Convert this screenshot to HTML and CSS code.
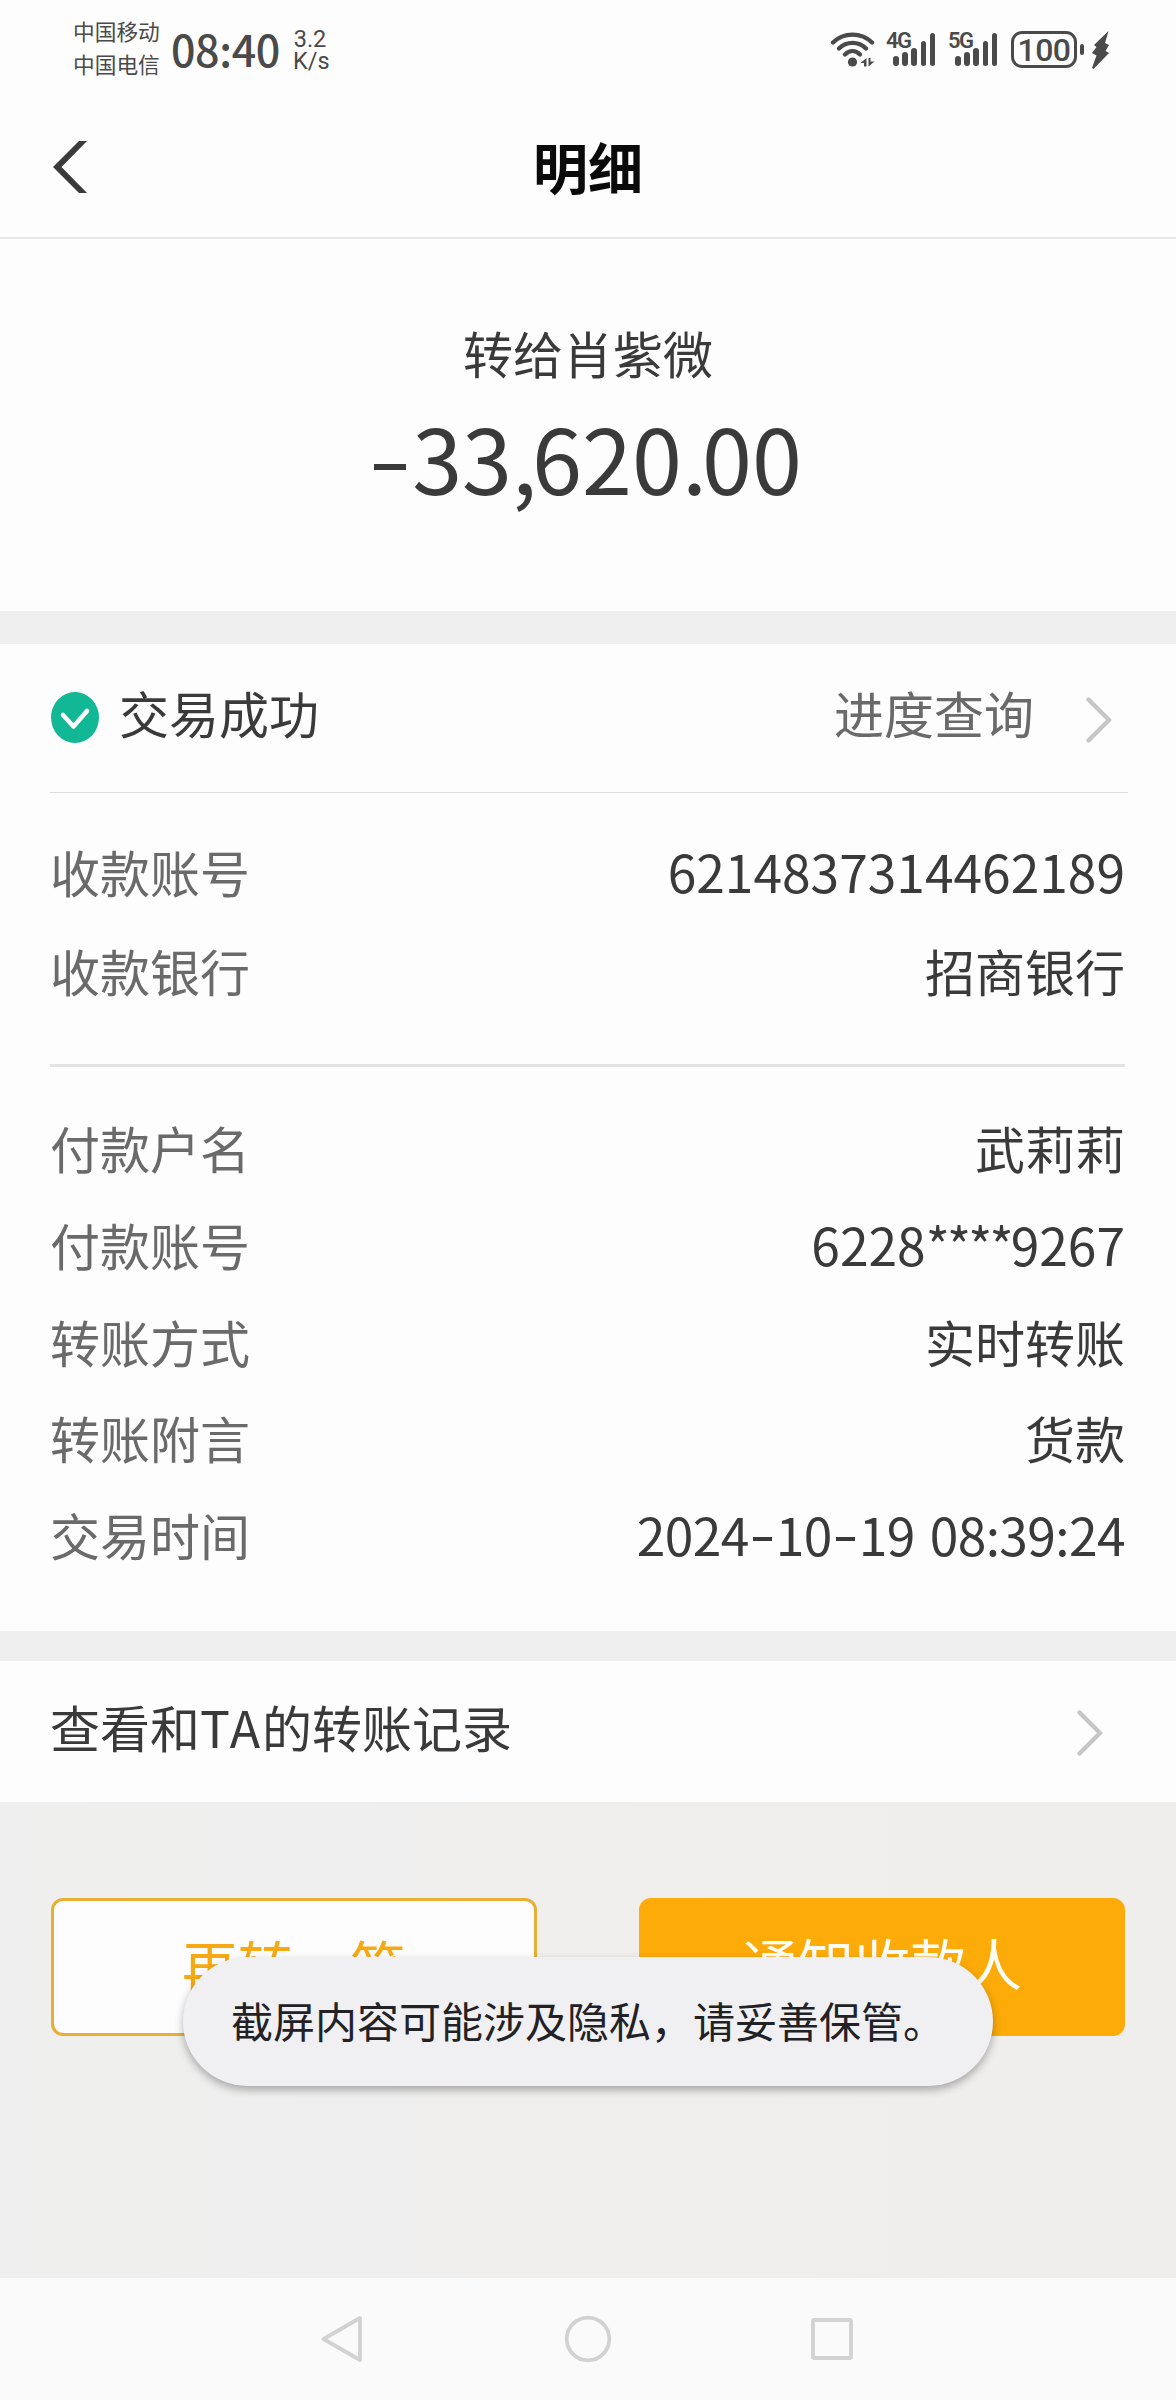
FILE: index.html
```html
<!DOCTYPE html>
<html lang="zh-CN">
  <head>
    <meta charset="utf-8">
    <title>明细</title>
    <link rel="stylesheet" href="styles.css">
  </head>
  <body>
    <div class="status">
      <div class="carriers">
        <div>中国移动</div>
        <div>中国电信</div>
      </div>
      <div class="clock">08:40</div>
      <div class="speed">
        <div>3.2</div>
        <div>K/s</div>
      </div>
      <div class="status-icons">
        <svg class="wifi" width="46" height="36" viewBox="0 0 46 36">
          <g fill="none" stroke="#4a4a4a" stroke-width="4.4" stroke-linecap="round">
            <path d="M3 11.5C13.500 1 31.500 1 42 11.500"/>
            <path d="M9 17.500C16.500 10 28.500 10 36 17.500"/>
            <path d="M15 23.500C19.500 19 25.500 19 30 23.500"/>
          </g>
          <circle cx="22.500" cy="31" r="4.600" fill="#4a4a4a"/>
          <path d="M30.500 32l6-5v8.500h-2.500v-3.500zM38.500 27h2v3.500h4l-6 5z" fill="#4a4a4a"/>
        </svg>
        <div class="signal">
          <span>4G</span>
          <i class="b1"></i><i class="b2"></i><i class="b3"></i><i class="b4"></i><i class="b5"></i>
        </div>
        <div class="signal">
          <span>5G</span>
          <i class="b1"></i><i class="b2"></i><i class="b3"></i><i class="b4"></i><i class="b5"></i>
        </div>
        <div class="battery">100</div>
        <div class="nub"></div>
        <svg class="bolt" width="17" height="38" viewBox="0 0 17 38">
          <path d="M16.500 0L2 14l2.500 2L0 22l4.500 2.500L0 37l1.500 1L17 22l-3.500-2 3.500-6-4-2z" fill="#4a4a4a"/>
        </svg>
      </div>
    </div>

    <div class="header">
      <svg class="back" width="36" height="54" viewBox="0 0 36 54">
        <path d="M27 1h8L9.500 27 35 53h-8L1 27z" fill="#3a3a3a"/>
      </svg>
      <h1>明细</h1>
    </div>

    <div class="summary">
      <div class="payee">转给肖紫微</div>
      <div class="amount"><b></b>33<span>,</span>620<span>.</span>00</div>
    </div>

    <div class="detail">
      <div class="result">
        <svg class="check" width="48" height="51" viewBox="0 0 48 51">
          <ellipse cx="24" cy="25.500" rx="24" ry="25.500" fill="#12b895"/>
          <path d="M12 23l10.500 11.500L36 19" fill="none" stroke="#fff" stroke-width="4.500" stroke-linecap="round" stroke-linejoin="round"/>
        </svg>
        <span>交易成功</span>
        <span class="progress">进度查询</span>
        <svg class="arrow" width="26" height="46" viewBox="0 0 26 46">
          <path d="M2.500 2.500L23 23 2.500 43.500"/>
        </svg>
      </div>
      <div class="group first">
        <div class="row"><label>收款账号</label><span class="num">6214837314462189</span></div>
        <div class="row"><label>收款银行</label><span>招商银行</span></div>
      </div>
      <div class="group second">
        <div class="row"><label>付款户名</label><span>武莉莉</span></div>
        <div class="row"><label>付款账号</label><span class="num">6228<span class="stars">****</span>9267</span></div>
        <div class="row"><label>转账方式</label><span>实时转账</span></div>
        <div class="row"><label>转账附言</label><span>货款</span></div>
        <div class="row"><label>交易时间</label><span class="num time">2024<b></b>10<b></b>19 08:39:24</span></div>
      </div>
    </div>

    <div class="history">
      <span>查看和<span class="ta">TA</span>的转账记录</span>
      <svg class="arrow" width="26" height="46" viewBox="0 0 26 46">
        <path d="M2.500 2.500L23 23 2.500 43.500"/>
      </svg>
    </div>

    <div class="actions">
      <div class="btn">再转一笔</div>
      <div class="btn primary">通知收款人</div>
      <div class="toast">截屏内容可能涉及隐私，请妥善保管。</div>
    </div>

    <div class="nav">
      <svg width="48" height="48" viewBox="0 0 48 48">
        <path d="M40 3v42L3.500 24z"/>
      </svg>
      <svg width="48" height="48" viewBox="0 0 48 48">
        <circle cx="24" cy="24" r="21.300"/>
      </svg>
      <svg width="48" height="48" viewBox="0 0 48 48">
        <rect x="5" y="5" width="38" height="38" rx="1.500"/>
      </svg>
    </div>
  </body>
</html>
```

FILE: styles.css
```css
* {
  box-sizing: border-box;
}
body {
  margin: 0;
  height: 2400px;
  display: flex;
  flex-direction: column;
  background-color: #efefef;
  color: #3a3a3a;
  font-family: "Noto Sans CJK SC", sans-serif;
  font-size: 50px;
  line-height: 70px;
  overflow: hidden;
}

/* status bar */
.status {
  height: 100px;
  padding-left: 73px;
  display: flex;
  background-color: #fdfdfd;
  color: #4a4a4a;
}
.carriers {
  width: 98px;
  padding-top: 14px;
  font-size: 21.7px;
  line-height: 33px;
}
.clock {
  width: 122px;
  padding-top: 13px;
  font-weight: 500;
  font-size: 43px;
  letter-spacing: -0.4px;
}
.speed {
  width: 34px;
  padding-top: 29px;
  font-family: Roboto, sans-serif;
  font-size: 23.5px;
  line-height: 21.5px;
  text-align: center;
}
.status-icons {
  margin-left: auto;
  margin-right: 67px;
  padding-top: 31px;
  display: flex;
  align-items: flex-start;
}
.wifi {
  margin-right: 11px;
}
.signal {
  position: relative;
  width: 50px;
  height: 35px;
  margin-right: 12px;
  padding-left: 6px;
  display: flex;
  align-items: flex-end;
  gap: 3.6px;
}
.signal span {
  position: absolute;
  left: -1px;
  top: 0;
  font-family: Roboto, sans-serif;
  font-weight: 600;
  font-size: 22px;
  line-height: 20px;
  letter-spacing: -1.5px;
}
.signal i {
  width: 5.6px;
  border-radius: 3px;
  background-color: #4a4a4a;
}
.b1 { height: 10px; }
.b2 { height: 14px; }
.b3 { height: 18px; }
.b4 { height: 25px; }
.b5 { height: 33px; }
.battery {
  width: 66px;
  height: 37px;
  border: solid 3px #4a4a4a;
  border-radius: 11px;
  font-family: Roboto, sans-serif;
  font-weight: 500;
  font-size: 32px;
  line-height: 32px;
  letter-spacing: -0.5px;
  text-align: center;
}
.nub {
  width: 4px;
  height: 11px;
  margin: 13px 8px 0 3px;
  border-radius: 2px;
  background-color: #4a4a4a;
}

/* title bar */
.header {
  height: 139px;
  padding: 0 52px;
  display: grid;
  grid-template-columns: 40px 1fr 40px;
  background-color: #fdfdfd;
  border-bottom: solid 2px #e8e8e8;
}
.back {
  margin-top: 40px;
}
h1 {
  margin: 30px 0 0;
  color: #0a0a0a;
  font-size: 55px;
  font-weight: 700;
  line-height: 70px;
  text-align: center;
}

.summary {
  height: 372px;
  padding-top: 78px;
  background-color: #fdfdfd;
  text-align: center;
}
.payee {
  height: 70px;
}
.amount {
  height: 100px;
  margin-top: 19px;
  font-size: 90px;
  line-height: 100px;
}
.amount b {
  display: inline-block;
  width: 32px;
  height: 6px;
  margin-right: 6px;
  vertical-align: 25px;
  background-color: #3a3a3a;
}
.amount span {
  letter-spacing: -5px;
}

.detail {
  height: 987px;
  margin-top: 33px;
  padding: 0 51px 0 50px;
  background-color: #fdfdfd;
}
.result {
  height: 149px;
  margin-right: -3px;
  padding: 33px 0 0 1px;
  display: flex;
  border-bottom: solid 1px #dedede;
}
.check {
  margin: 15px 20px 0 0;
}
.progress {
  margin-left: auto;
  color: #6a6a6a;
}
.arrow {
  fill: none;
  stroke: #c6c6c6;
  stroke-width: 4.4;
  stroke-linecap: round;
}
.result .arrow {
  margin: 20px 16px 0 52px;
}
.group {
  display: flex;
  flex-direction: column;
}
.first {
  height: 274px;
  padding-top: 43px;
  gap: 29px;
  border-bottom: solid 3px #e3e3e3;
}
.second {
  padding-top: 45px;
  gap: 26.8px;
}
.row {
  height: 70px;
  display: flex;
  justify-content: space-between;
}
.row label {
  color: #6a6a6a;
}
.num {
  font-size: 51.5px;
}
.stars {
  letter-spacing: -2.8px;
}
.time {
  letter-spacing: -0.6px;
  word-spacing: 4px;
}
.time b {
  display: inline-block;
  width: 19px;
  height: 4px;
  margin: 0 4px;
  vertical-align: 15px;
  background-color: #3a3a3a;
}

.history {
  height: 141px;
  margin-top: 30px;
  padding: 30px 73px 0 50px;
  display: flex;
  justify-content: space-between;
  background-color: #fdfdfd;
}
.history .arrow {
  margin-top: 19px;
}
.ta {
  letter-spacing: 2px;
}

.actions {
  position: relative;
  height: 476px;
  padding: 96px 51px 0;
  display: flex;
  align-items: flex-start;
  justify-content: space-between;
  background: linear-gradient(to right, #efefef, #efeeec);
}
.btn {
  width: 486px;
  height: 138px;
  border: solid 3px #e9af35;
  border-radius: 12px;
  background-color: #fdfdfd;
  color: #f6a913;
  font-size: 56px;
  line-height: 125px;
  text-align: center;
}
.primary {
  border-color: #fdab09;
  background-color: #fdab09;
  color: #fffdf5;
  line-height: 122px;
}
.toast {
  position: absolute;
  left: 183px;
  top: 155px;
  width: 810px;
  height: 129px;
  padding-left: 48px;
  border-radius: 65px;
  background-color: #f0eff1;
  box-shadow: 0 4px 8px rgba(0, 0, 0, 0.3);
  color: #222226;
  font-size: 42px;
  line-height: 125px;
  white-space: nowrap;
}

/* system navigation */
.nav {
  flex: 1;
  padding: 37px 320px 0;
  display: flex;
  justify-content: space-between;
  align-items: flex-start;
  background-color: #fafafa;
}
.nav svg {
  fill: none;
  stroke: #d2d2d2;
  stroke-width: 3.8;
  stroke-linejoin: round;
}
```
